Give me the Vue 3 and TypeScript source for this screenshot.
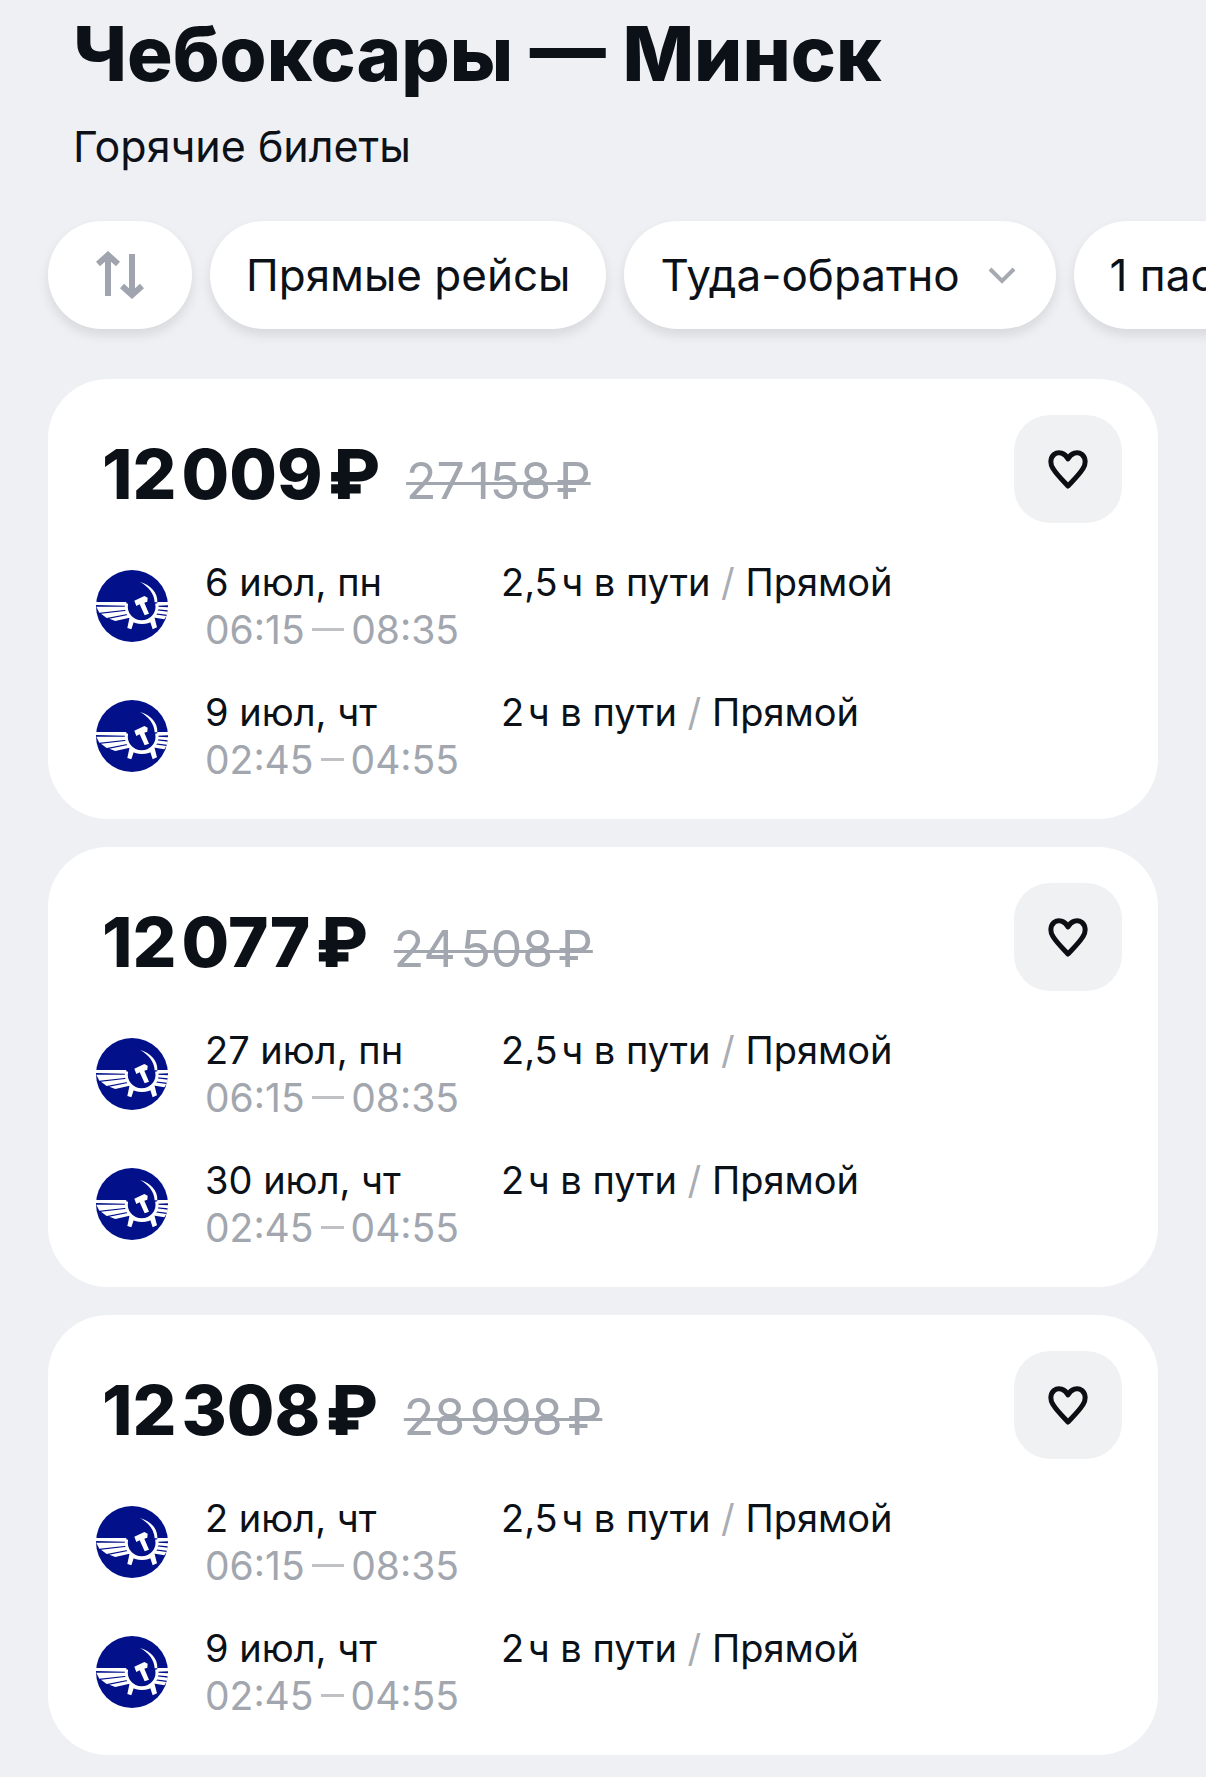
<script setup lang="ts">
import { ref } from 'vue'

interface Flight {
  date: string
  depart: string
  arrive: string
  duration: string
}

interface Ticket {
  id: number
  price: string
  oldPrice: string
  flights: Flight[]
}

const there = (date: string): Flight => ({ date, depart: '06:15', arrive: '08:35', duration: '2,5\u200Aч в пути' })
const back = (date: string): Flight => ({ date, depart: '02:45', arrive: '04:55', duration: '2\u200Aч в пути' })

const tickets: Ticket[] = [
  { id: 1, price: '12\u200A009\u200A₽', oldPrice: '27\u200A158\u200A₽', flights: [there('6 июл, пн'), back('9 июл, чт')] },
  { id: 2, price: '12\u200A077\u200A₽', oldPrice: '24\u200A508\u200A₽', flights: [there('27 июл, пн'), back('30 июл, чт')] },
  { id: 3, price: '12\u200A308\u200A₽', oldPrice: '28\u200A998\u200A₽', flights: [there('2 июл, чт'), back('9 июл, чт')] },
]

const trip = ref('round')
const passengers = ref('1')
const liked = ref<number[]>([])

function toggleLike(id: number) {
  liked.value = liked.value.includes(id) ? liked.value.filter((x) => x !== id) : [...liked.value, id]
}
</script>

<template>
  <main class="page">
    <header class="head">
      <h1 class="title">Чебоксары — Минск</h1>
      <p class="subtitle">Горячие билеты</p>
    </header>

    <div class="filters">
      <button class="chip sort" type="button" aria-label="Сортировка">
        <svg width="48" height="48" viewBox="0 0 48 48" fill="none" stroke="#9fa4ae" stroke-width="6">
          <path d="M12 45V4M2 13 12 4l10 9M36 3v41M26 35l10 9 10-9" />
        </svg>
      </button>
      <button class="chip" type="button">Прямые рейсы</button>
      <label class="chip menu">
        <select v-model="trip" class="select" aria-label="Тип поездки">
          <option value="round">Туда-обратно</option>
          <option value="one">В одну сторону</option>
        </select>
        <svg class="chevron" width="28" height="18" viewBox="0 0 28 18" fill="none" stroke="#a5a9b0" stroke-width="4">
          <path d="M2 3l12 12L26 3" />
        </svg>
      </label>
      <label class="chip menu">
        <select v-model="passengers" class="select" aria-label="Пассажиры">
          <option value="1">1 пассажир</option>
          <option value="2">2 пассажира</option>
        </select>
        <svg class="chevron" width="28" height="18" viewBox="0 0 28 18" fill="none" stroke="#a5a9b0" stroke-width="4">
          <path d="M2 3l12 12L26 3" />
        </svg>
      </label>
    </div>

    <section class="list">
      <article v-for="ticket in tickets" :key="ticket.id" class="card">
        <div class="top">
          <p class="prices">
            <strong class="price">{{ ticket.price }}</strong>
            <s class="old">{{ ticket.oldPrice }}</s>
          </p>
          <button
            class="like"
            type="button"
            aria-label="В избранное"
            :aria-pressed="liked.includes(ticket.id)"
            @click="toggleLike(ticket.id)"
          >
            <svg width="40" height="40" viewBox="0 0 40 40" fill="none" stroke="#0b0f14" stroke-width="5" stroke-linejoin="round">
              <path d="M20 10C17 4 10.500 2 6 5.500c-4 3.500-4 9.500-1 14C9 26 14.500 31 20 37c5.500-6 11-11 15-17.500 3-4.500 3-10.500-1-14C29.500 2 23 4 20 10Z" />
            </svg>
          </button>
        </div>

        <div v-for="(flight, i) in ticket.flights" :key="i" class="flight">
          <svg class="logo" width="72" height="72" viewBox="12 12 216 216" aria-hidden="true">
            <circle cx="120" cy="120" r="108" fill="#02108a" />
            <g fill="#fff">
              <path d="M12 108H103L102 119 12 117Z" />
              <path d="M13 122 101 122 104 131 22 140Z" />
              <path d="M27 143 105 134 110 143 44 156Z" />
              <path d="M52 158 111 146 119 154 70 165Z" />
              <path d="M196 108H228V118L196 119Z" />
              <path d="M196 122 228 124V133L195 130Z" />
              <path d="M193 133 228 137 225 146 189 142Z" />
              <path d="M187 145 223 150 217 160 180 154Z" />
              <path d="M144 48C176 57 198 80 196 109L188 109C187 84 170 62 144 48Z" />
              <path d="M127 104 157 90 167 95 166 107 157 110 171 143 158 148 143 115 133 120Z" />
              <path d="M113 153 128 160 118 190 106 186Z" />
              <path d="M172 160 187 153 195 184 182 190Z" />
            </g>
            <g fill="none" stroke="#fff">
              <path d="M104 112A46 46 0 1 0 194 112" stroke-width="9" />
              <path d="M114 158A56 56 0 0 0 186 158" stroke-width="6" />
            </g>
          </svg>
          <div class="when">
            <div>{{ flight.date }}</div>
            <div class="times">
              <time>{{ flight.depart }}</time>
              <span class="dash"></span>
              <time>{{ flight.arrive }}</time>
            </div>
          </div>
          <div class="route">{{ flight.duration }} <span class="slash">/</span> Прямой</div>
        </div>
      </article>
    </section>
  </main>
</template>

<style>
body {
  background: #eef0f4;
}
</style>

<style scoped>
.page {
  box-sizing: border-box;
  min-height: 100vh;
  padding: 7px 0 22px;
  overflow: hidden;
  background: #eef0f4;
  color: #0c1118;
  font-family: Inter, "Liberation Sans", sans-serif;
}

.head {
  padding: 0 73px;
}

.title {
  margin: 0;
  font-size: 76px;
  font-weight: 800;
  line-height: 92px;
}

.subtitle {
  margin: 21px 0 0;
  font-size: 43px;
  line-height: 52px;
}

.filters {
  display: flex;
  gap: 18px;
  padding: 49px 48px 50px;
  overflow-x: auto;
  scrollbar-width: none;
}

.chip {
  box-sizing: border-box;
  flex: none;
  display: flex;
  align-items: center;
  gap: 28px;
  height: 108px;
  padding: 0 36px;
  border: 0;
  border-radius: 54px;
  background: #fff;
  box-shadow: 0 6px 12px rgba(0, 0, 0, 0.1);
  color: inherit;
  font-family: inherit;
  font-size: 44px;
  white-space: nowrap;
}

.sort {
  justify-content: center;
  width: 144px;
}

.menu {
  padding-right: 40px;
}

.select {
  appearance: none;
  field-sizing: content;
  padding: 0;
  border: 0;
  background: none;
  color: inherit;
  font: inherit;
}

.list {
  display: flex;
  flex-direction: column;
  gap: 28px;
  padding: 0 48px;
}

.card {
  display: flex;
  flex-direction: column;
  gap: 36px;
  padding: 36px;
  border-radius: 60px;
  background: #fff;
}

.top {
  display: flex;
  justify-content: space-between;
  align-items: center;
}

.prices {
  display: flex;
  align-items: baseline;
  gap: 26px;
  margin: 0;
  padding: 16px 0 0 18px;
  line-height: 80px;
}

.price {
  font-size: 69px;
  font-weight: 800;
}

.old {
  color: #a2a6ae;
  font-size: 50px;
  text-decoration-thickness: 3px;
}

.like {
  display: flex;
  align-items: center;
  justify-content: center;
  width: 108px;
  height: 108px;
  padding: 0;
  border: 0;
  border-radius: 36px;
  background: #eff1f3;
}

.flight {
  display: grid;
  grid-template-columns: 72px 254px 1fr;
  column-gap: 37px;
  padding-left: 12px;
  font-size: 38px;
  line-height: 47px;
}

.logo {
  align-self: center;
}

.times {
  display: flex;
  align-items: center;
  gap: 7px;
  color: #a2a6ae;
  font-size: 39px;
}

.dash {
  flex: 1;
  height: 3px;
  background: #bfc1c5;
}

.route {
  margin-left: 5px;
}

.slash {
  color: #a9adb3;
}
</style>
